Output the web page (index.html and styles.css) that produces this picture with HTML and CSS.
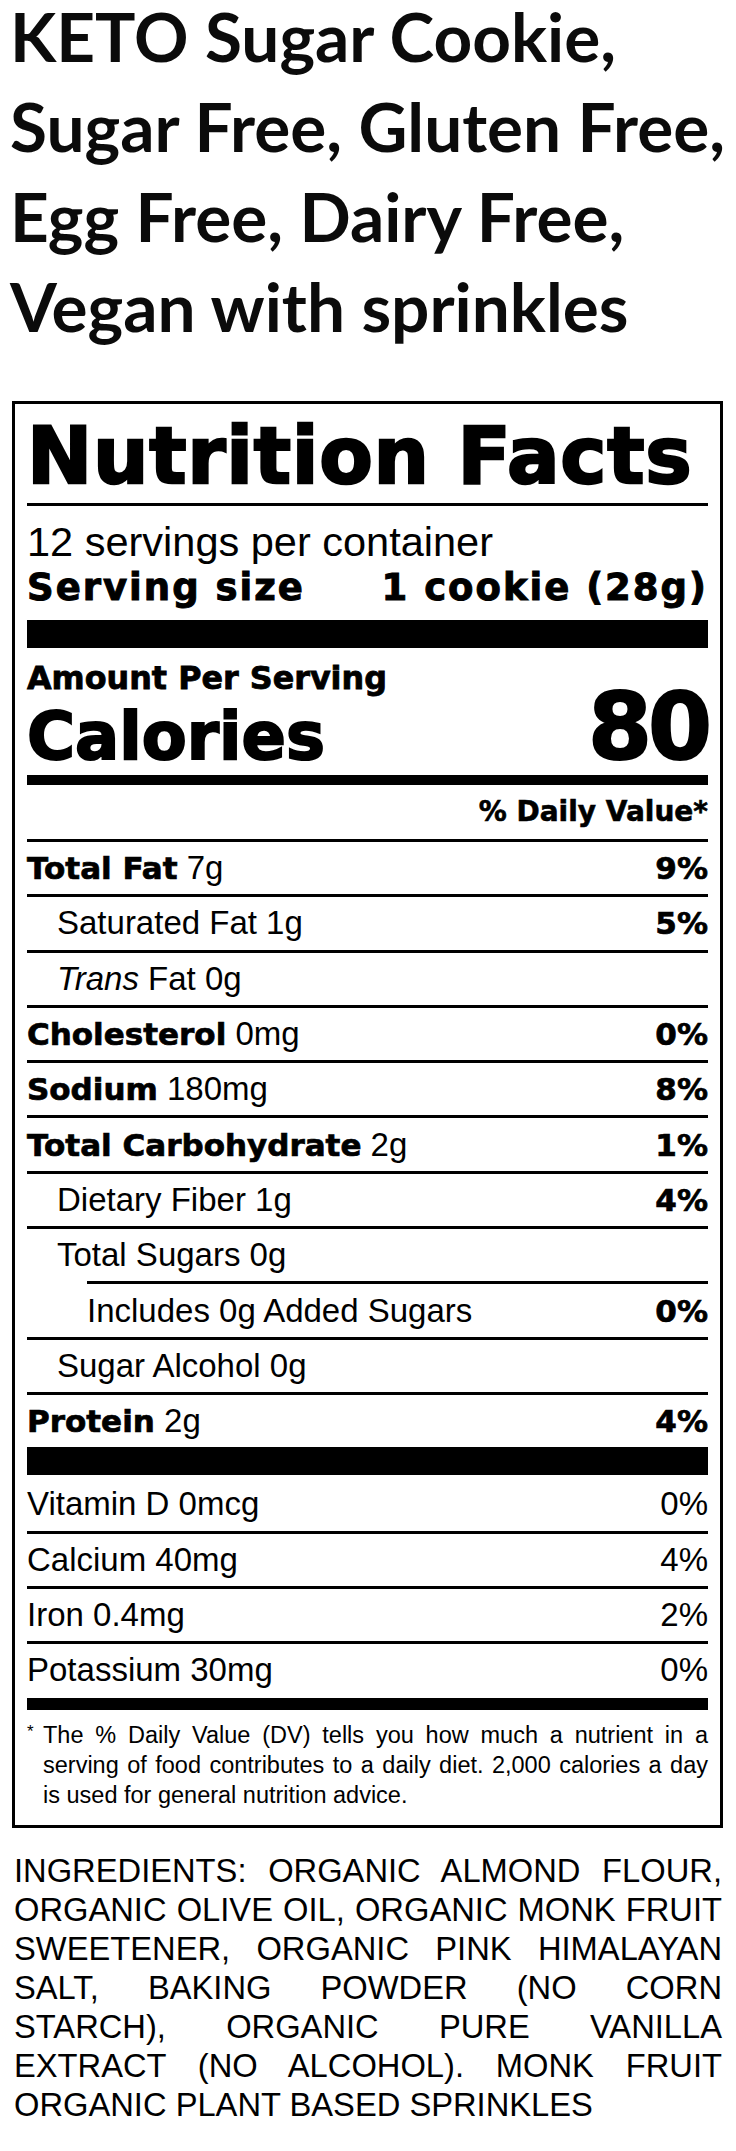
FILE: index.html
```html
<!DOCTYPE html>
<html lang="en">
<head>
<meta charset="utf-8">
<title>KETO Sugar Cookie – Nutrition Facts</title>
<link rel="stylesheet" href="styles.css">
</head>
<body>
<h1 class="title">
  <span class="tl tl-first">KETO Sugar Cookie,</span>
  <span class="tl">Sugar Free, Gluten Free,</span>
  <span class="tl">Egg Free, Dairy Free,</span>
  <span class="tl">Vegan with sprinkles</span>
</h1>

<section class="label">
  <div class="nf-title">Nutrition Facts</div>
  <div class="rule-thin"></div>
  <div class="servings">12 servings per container</div>
  <div class="serving-size"><span>Serving size</span><span>1 cookie (28g)</span></div>
  <div class="bar-thick"></div>
  <div class="amount">Amount Per Serving</div>
  <div class="calories"><span class="cal-label">Calories</span><span class="cal-num">80</span></div>
  <div class="bar-medium"></div>
  <div class="dv-head">% Daily Value*</div>

  <div class="row"><span class="name"><strong class="bold">Total Fat</strong> 7g</span><span class="pct bold">9%</span></div>
  <div class="row ind"><span class="name">Saturated Fat 1g</span><span class="pct bold">5%</span></div>
  <div class="row ind"><span class="name"><em class="it">Trans</em> Fat 0g</span></div>
  <div class="row"><span class="name"><strong class="bold">Cholesterol</strong> 0mg</span><span class="pct bold">0%</span></div>
  <div class="row"><span class="name"><strong class="bold">Sodium</strong> 180mg</span><span class="pct bold">8%</span></div>
  <div class="row"><span class="name"><strong class="bold">Total Carbohydrate</strong> 2g</span><span class="pct bold">1%</span></div>
  <div class="row ind"><span class="name">Dietary Fiber 1g</span><span class="pct bold">4%</span></div>
  <div class="row ind"><span class="name">Total Sugars 0g</span></div>
  <div class="row ind2"><span class="name">Includes 0g Added Sugars</span><span class="pct bold">0%</span></div>
  <div class="row ind"><span class="name">Sugar Alcohol 0g</span></div>
  <div class="row"><span class="name"><strong class="bold">Protein</strong> 2g</span><span class="pct bold">4%</span></div>

  <div class="bar-thick bar-vit"></div>

  <div class="row first"><span class="name">Vitamin D 0mcg</span><span class="pct">0%</span></div>
  <div class="row"><span class="name">Calcium 40mg</span><span class="pct">4%</span></div>
  <div class="row"><span class="name">Iron 0.4mg</span><span class="pct">2%</span></div>
  <div class="row"><span class="name">Potassium 30mg</span><span class="pct">0%</span></div>

  <div class="bar-small"></div>

  <div class="foot">
    <span class="ast">*</span>
    <div class="foot-text">
      <span class="jl">The % Daily Value (DV) tells you how much a nutrient in a</span>
      <span class="jl">serving of food contributes to a daily diet. 2,000 calories a day</span>
      <span class="ll">is used for general nutrition advice.</span>
    </div>
  </div>
</section>

<p class="ingredients">
  <span class="jl">INGREDIENTS: ORGANIC ALMOND FLOUR,</span>
  <span class="jl">ORGANIC OLIVE OIL, ORGANIC MONK FRUIT</span>
  <span class="jl">SWEETENER, ORGANIC PINK HIMALAYAN</span>
  <span class="jl">SALT, BAKING POWDER (NO CORN</span>
  <span class="jl">STARCH), ORGANIC PURE VANILLA</span>
  <span class="jl">EXTRACT (NO ALCOHOL). MONK FRUIT</span>
  <span class="ll">ORGANIC PLANT BASED SPRINKLES</span>
</p>
</body>
</html>
```

FILE: styles.css
```css
html, body {
  margin: 0;
  padding: 0;
  background: #ffffff;
  color: #000000;
}

.title {
  margin: 0;
  padding-left: 10px;
  font-family: Lato, "Liberation Sans", sans-serif;
  font-weight: 700;
  font-size: 67.5px;
  line-height: 90px;
  color: #0b0b0b;
}

.tl {
  display: block;
}

.tl-first {
  line-height: 72px;
  margin-bottom: 9px;
}

.label {
  box-sizing: border-box;
  width: 711px;
  margin: 50px 0 0 12px;
  border: 3px solid #000;
  padding: 13px 12px 14px;
  font-family: "Liberation Sans", Arial, sans-serif;
}

.bold,
.nf-title,
.serving-size,
.amount,
.calories,
.dv-head {
  font-family: "DejaVu Sans", sans-serif;
  font-weight: 700;
  font-style: normal;
}

.nf-title {
  font-size: 78px;
  line-height: 78px;
  letter-spacing: 0.7px;
  white-space: nowrap;
  -webkit-text-stroke: 2.4px #000;
}

.rule-thin {
  height: 3px;
  margin-top: 8px;
  background: #000;
}

.servings {
  margin-top: 14px;
  font-size: 41.5px;
  line-height: 44px;
}

.serving-size {
  margin-top: 2px;
  display: flex;
  justify-content: space-between;
  font-size: 37px;
  line-height: 44px;
  letter-spacing: 2px;
  -webkit-text-stroke: 1px #000;
}

.bar-thick {
  height: 28px;
  margin-top: 10px;
  background: #000;
}

.amount {
  margin-top: 12px;
  font-size: 31.8px;
  line-height: 36px;
  -webkit-text-stroke: 0.8px #000;
}

.calories {
  display: flex;
  justify-content: space-between;
  align-items: baseline;
  -webkit-text-stroke: 2px #000;
}

.cal-label {
  font-size: 65.5px;
  line-height: 64px;
}

.cal-num {
  font-size: 92px;
  line-height: 64px;
  letter-spacing: -4px;
}

.bar-medium {
  height: 10px;
  margin-top: 7px;
  background: #000;
}

.dv-head {
  height: 54px;
  display: flex;
  align-items: center;
  justify-content: flex-end;
  font-size: 28px;
  line-height: 32px;
  -webkit-text-stroke: 0.6px #000;
}

.row {
  box-sizing: border-box;
  height: 55.3px;
  border-top: 3px solid #000;
  display: flex;
  align-items: center;
  justify-content: space-between;
  font-size: 33px;
  line-height: 38px;
  white-space: nowrap;
}

.row.first {
  border-top-color: transparent;
}

.row .bold {
  font-size: 31px;
  -webkit-text-stroke: 0.7px #000;
}

.ind {
  padding-left: 30px;
}

.ind2 {
  margin-left: 60px;
}

.it {
  font-style: italic;
}

.bar-vit {
  margin-top: 0;
  height: 28px;
}

.bar-small {
  height: 12px;
  margin-top: 2px;
  background: #000;
}

.foot {
  display: flex;
  margin-top: 11px;
  font-size: 23.5px;
  line-height: 29.7px;
}

.ast {
  flex: 0 0 16px;
  font-size: 17px;
  line-height: 22px;
}

.foot-text {
  flex: 1;
}

.jl {
  display: block;
  text-align: justify;
  text-align-last: justify;
}

.ll {
  display: block;
  text-align: left;
}

.ingredients {
  margin: 23px 0 0;
  padding: 0 14px;
  font-family: "Liberation Sans", Arial, sans-serif;
  font-size: 32.7px;
  line-height: 39px;
}
```
